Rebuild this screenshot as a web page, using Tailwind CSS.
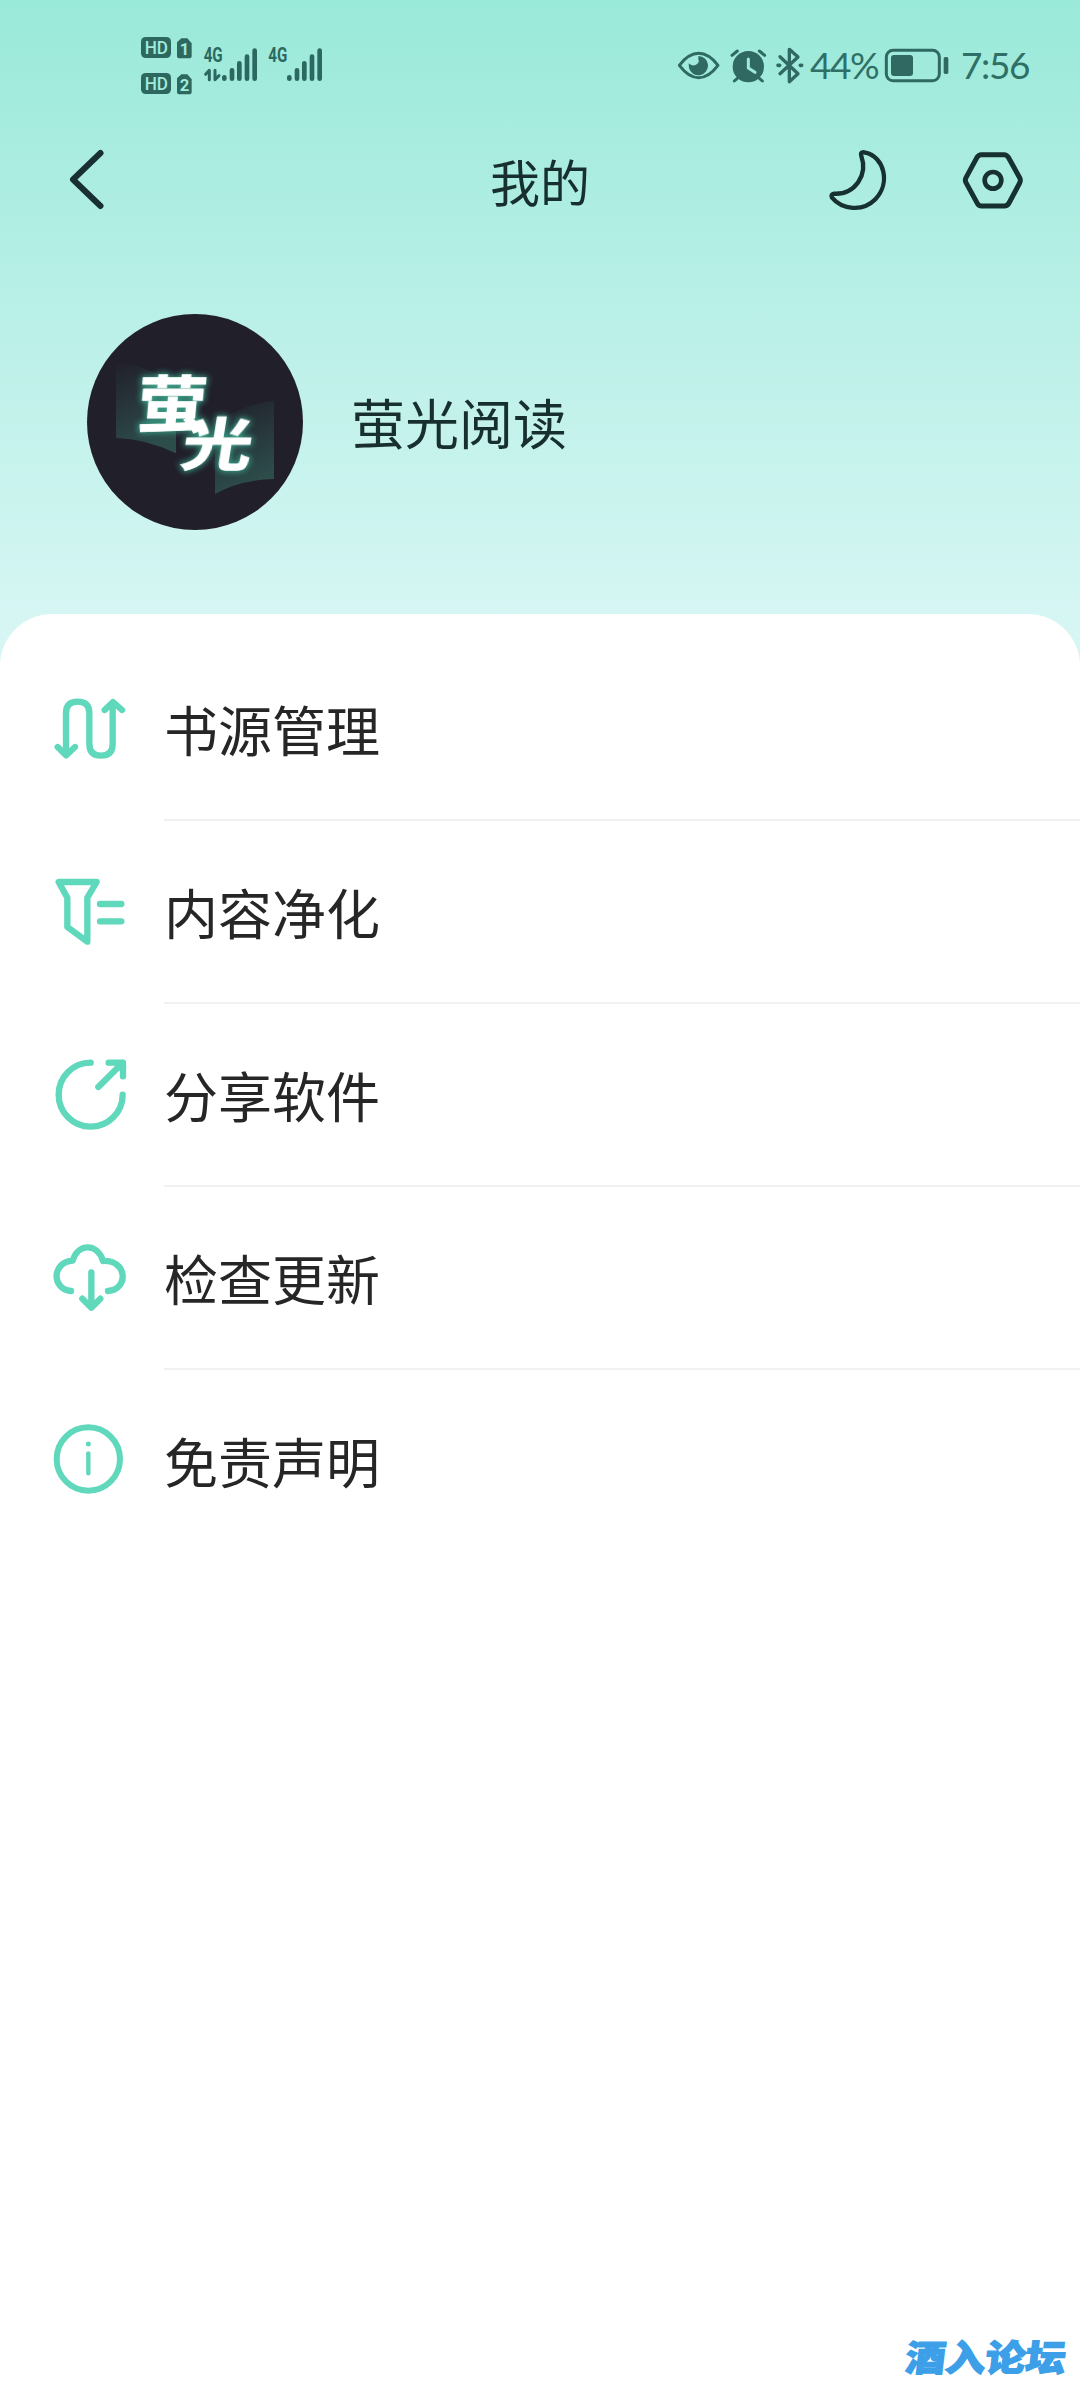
<!DOCTYPE html>
<html lang="zh-CN">
<head>
<meta charset="utf-8">
<title>我的</title>
<script src="https://cdn.jsdelivr.net/npm/@tailwindcss/browser@4"></script>
</head>
<body class="w-[1080px] h-[2400px] overflow-hidden bg-white font-['Noto_Sans_CJK_SC',sans-serif]">
<div class="flex flex-col w-[1080px] h-[2400px] bg-linear-to-b from-[#99e9d9] to-[#d6f6f4] to-[620px]">

  <!-- status bar -->
  <div class="flex justify-between items-start h-[130px] pt-[20px] pl-[120px] pr-[40px] shrink-0">
    <svg class="w-[220px] h-[90px]" viewBox="0 0 660 270" fill="#2c685f" font-family="Roboto, sans-serif" font-weight="700">
      <rect x="63" y="51" width="90" height="63" rx="14"/>
      <text x="74" y="103" font-size="56" font-weight="500" fill="#a0ebdd" textLength="70" lengthAdjust="spacingAndGlyphs">HD</text>
      <path d="M184 55h18l13 15v37q0 8-8 8h-28q-8 0-8-8V67z"/>
      <text x="179" y="106" font-size="50" fill="#a0ebdd">1</text>
      <rect x="63" y="159" width="90" height="63" rx="14"/>
      <text x="74" y="211" font-size="56" font-weight="500" fill="#a0ebdd" textLength="70" lengthAdjust="spacingAndGlyphs">HD</text>
      <path d="M184 163h18l13 15v37q0 8-8 8h-28q-8 0-8-8v-40z"/>
      <text x="179" y="214" font-size="50" fill="#a0ebdd">2</text>
      <text x="251" y="126" font-size="58" textLength="57" lengthAdjust="spacingAndGlyphs">4G</text>
      <text x="445" y="126" font-size="58" textLength="57" lengthAdjust="spacingAndGlyphs">4G</text>
      <path d="M268 179v-28l-11 12M285 151v28l12-12" fill="none" stroke="#2c685f" stroke-width="9" stroke-linecap="round" stroke-linejoin="round"/>
      <path d="M313 172v4M336 151v25M358 130v46M381 110v66M404 92v84M508 172v4M531 151v25M553 130v46M576 110v66M599 92v84" stroke="#2c685f" stroke-width="14" stroke-linecap="round"/>
    </svg>
    <div class="flex items-center h-[70px] mt-[10px] text-[#2f6f66] font-['Lato',sans-serif] text-[37px] tracking-[-1.4px]">
      <svg class="w-[150px] h-[70px]" viewBox="0 0 450 210" fill="none" stroke="#2f6962" stroke-linecap="round" stroke-linejoin="round">
        <path d="M58 106Q86 70 116 70T174 106Q146 143 116 143T58 106Z" stroke-width="9"/>
        <path d="M115 78a29 29 0 1 1-28 36l-1-14q10 10 22 4t7-16z" fill="#2f6962" stroke="none"/>
        <circle cx="265" cy="110" r="47" fill="#2f6962" stroke="none"/>
        <path d="M232 145l-9 8M298 145l9 8M216 76l16-13M314 76l-16-13" stroke-width="9"/>
        <path d="M265 87v27l20 13" stroke="#9feadd" stroke-width="9"/>
        <path d="M360 80l54 51-26 24V58l26 23-54 50" stroke-width="10"/>
        <path d="M354 106h5M421 106h4" stroke-width="11"/>
      </svg>
      <span class="w-[74px]">44%</span>
      <svg class="w-[70px] h-[70px]" viewBox="671 0 210 210">
        <rect x="678" y="61" width="159" height="91" rx="20" fill="none" stroke="#2f6962" stroke-width="9"/>
        <rect x="692" y="75" width="66" height="63" rx="9" fill="#2f6962"/>
        <rect x="850" y="81" width="14" height="51" rx="5" fill="#2f6962"/>
      </svg>
      <span class="w-[86px] pl-[7px]">7:56</span>
    </div>
  </div>

  <!-- title bar -->
  <div class="grid grid-cols-3 h-[100px] shrink-0 items-center">
    <svg class="w-[40px] h-[64px] ml-[67px]" viewBox="0 0 40 64" fill="none" stroke="#183034" stroke-width="6" stroke-linecap="round" stroke-linejoin="round"><path d="M33.500 5L6 31.500L33.500 58"/></svg>
    <div class="text-center text-[50px] leading-[100px] text-[#17302f]">我的</div>
    <svg class="w-[260px] h-[100px] ml-[80px]" viewBox="0 0 780 300" fill="none" stroke="#16312f" stroke-linejoin="round" stroke-linecap="round">
      <path d="M187 67Q181 67 184 78C204 134 166 194 102 191Q91 193 96 203C126 239 188 247 226 208C273 158 252 80 196 68Q190 66 187 67Z" stroke-width="13"/>
      <path d="M544 74H612Q620 74 625 82L659 143Q663 151 659 159L627 219Q622 228 613 228H545Q536 228 532 220L498 158Q494 151 498 143L531 82Q536 74 544 74Z" stroke-width="15"/>
      <circle cx="579" cy="151" r="25" stroke-width="14"/>
    </svg>
  </div>

  <!-- profile -->
  <div class="flex items-center h-[384px] shrink-0 pl-[87px] gap-[48px]">
    <svg class="size-[216px] rounded-full" viewBox="51 40 648 648">
      <defs>
        <linearGradient id="pl" x1="0" y1="0" x2="0.300" y2="1"><stop offset="0" stop-color="#211f2a"/><stop offset="1" stop-color="#2d4d4b"/></linearGradient>
        <filter id="glow" x="-30%" y="-30%" width="160%" height="160%"><feGaussianBlur stdDeviation="10"/></filter>
      </defs>
      <rect x="51" y="40" width="648" height="648" fill="#211f2a"/>
      <path d="M138 180Q240 200 318 250V458Q230 415 138 412Z" fill="url(#pl)"/>
      <path d="M435 370Q520 310 612 300V535Q510 538 435 580Z" fill="url(#pl)"/>
      <g font-family="'Noto Sans CJK SC', sans-serif" font-weight="700" font-size="200">
        <g fill="#3aa389" stroke="#3aa389" stroke-width="10" filter="url(#glow)">
          <text transform="translate(196 379) skewX(-5) scale(1.050 .92)">萤</text>
          <text transform="translate(328 492) skewX(-9) scale(1.060 .84)">光</text>
        </g>
        <g fill="#fff" stroke="#fff" stroke-width="3">
          <text transform="translate(196 379) skewX(-5) scale(1.050 .92)">萤</text>
          <text transform="translate(328 492) skewX(-9) scale(1.060 .84)">光</text>
        </g>
      </g>
    </svg>
    <div class="text-[54px] leading-none text-[#17302f]">萤光阅读</div>
  </div>

  <!-- menu -->
  <div class="relative flex flex-col flex-1 bg-white rounded-t-[52px] pt-[24px] text-[54px] text-[#262626]">
    <div class="flex h-[183px] pl-[48px] gap-[36px] items-center">
      <svg class="size-[80px] shrink-0" viewBox="55 58 240 240" fill="none" stroke="#5fd8bb" stroke-width="19" stroke-linecap="round" stroke-linejoin="round"><path d="M109 252V127Q109 93 144 93T179 127V220Q179 255 214 255T249 220V97M84 229L109 254L136 229M225 118L250 94L277 118"/><path d="M98 240H120L109 252ZM239 106H261L250 95Z" fill="#5fd8bb" stroke-width="6"/></svg>
      <div class="flex items-center flex-1 h-full border-b-2 border-[#f1f1f1]">书源管理</div>
    </div>
    <div class="flex h-[183px] pl-[48px] gap-[36px] items-center">
      <svg class="size-[80px] shrink-0" viewBox="55 67 240 240" fill="none" stroke="#5fd8bb" stroke-width="19" stroke-linecap="round" stroke-linejoin="round"><path d="M87 94H201L173 141V273L113 229V141ZM211 160H275M211 212H275"/></svg>
      <div class="flex items-center flex-1 h-full border-b-2 border-[#f1f1f1]">内容净化</div>
    </div>
    <div class="flex h-[183px] pl-[48px] gap-[36px] items-center">
      <svg class="size-[80px] shrink-0" viewBox="55 76 240 240" fill="none" stroke="#5fd8bb" stroke-width="19" stroke-linecap="round" stroke-linejoin="round"><path d="M183 96A96 96 0 1 0 279 192M206 169L279 96M237 96H280V137"/><path d="M262 100H276V114Z" fill="#5fd8bb" stroke-width="8"/></svg>
      <div class="flex items-center flex-1 h-full border-b-2 border-[#f1f1f1]">分享软件</div>
    </div>
    <div class="flex h-[183px] pl-[48px] gap-[36px] items-center">
      <svg class="size-[80px] shrink-0" viewBox="55 85 240 240" fill="none" stroke="#5fd8bb" stroke-width="19" stroke-linecap="round" stroke-linejoin="round"><path d="M124 241C65 235 66 154 129 150C145 96 204 98 220 151C294 147 298 237 235 241M185 185V290M158 264L185 291L212 264"/></svg>
      <div class="flex items-center flex-1 h-full border-b-2 border-[#f1f1f1]">检查更新</div>
    </div>
    <div class="flex h-[183px] pl-[48px] gap-[36px] items-center">
      <svg class="size-[80px] shrink-0" viewBox="55 64 240 240" fill="none" stroke="#5fd8bb" stroke-width="18" stroke-linecap="round"><circle cx="176" cy="175" r="95"/><path d="M176 158V218" stroke-width="13"/><circle cx="176" cy="130" r="7.500" fill="#5fd8bb" stroke="none"/></svg>
      <div class="flex items-center flex-1 h-full pb-[2px]">免责声明</div>
    </div>
    <div class="absolute right-[14px] bottom-[24px] text-[40px] leading-[40px] font-black text-[#3d9fe8] -skew-x-6 scale-y-90 [-webkit-text-stroke:1.5px_#3d9fe8]">酒入论坛</div>
  </div>
</div>
</body>
</html>
